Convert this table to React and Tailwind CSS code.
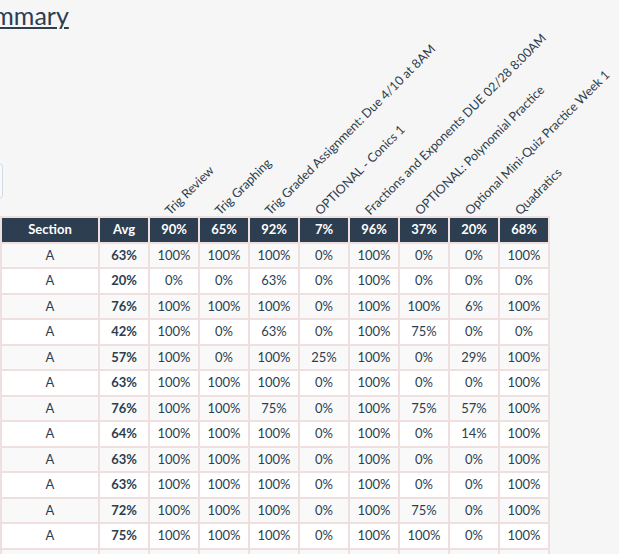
import React from "react";

const labels = [
  "Trig Review",
  "Trig Graphing",
  "Trig Graded Assignment: Due 4/10 at 8AM",
  "OPTIONAL - Conics 1",
  "Fractions and Exponents DUE 02/28 8:00AM",
  "OPTIONAL: Polynomial Practice",
  "Optional Mini-Quiz Practice Week 1",
  "Quadratics",
];

const totals = ["90%", "65%", "92%", "7%", "96%", "37%", "20%", "68%"];

const rows = [
  ["63%", 100, 100, 100, 0, 100, 0, 0, 100],
  ["20%", 0, 0, 63, 0, 100, 0, 0, 0],
  ["76%", 100, 100, 100, 0, 100, 100, 6, 100],
  ["42%", 100, 0, 63, 0, 100, 75, 0, 0],
  ["57%", 100, 0, 100, 25, 100, 0, 29, 100],
  ["63%", 100, 100, 100, 0, 100, 0, 0, 100],
  ["76%", 100, 100, 75, 0, 100, 75, 57, 100],
  ["64%", 100, 100, 100, 0, 100, 0, 14, 100],
  ["63%", 100, 100, 100, 0, 100, 0, 0, 100],
  ["63%", 100, 100, 100, 0, 100, 0, 0, 100],
  ["72%", 100, 100, 100, 0, 100, 75, 0, 100],
  ["75%", 100, 100, 100, 0, 100, 100, 0, 100],
  ["63%", 100, 100, 100, 0, 100, 0, 0, 100],
];

const cell = "border-2 border-[#f0dfdf] p-0";
const inner = "h-[23.5px] flex items-center justify-center";

export default function App() {
  return (
    <div className="w-[619px] h-[554px] overflow-hidden bg-[#f6f6f6] text-[#2c3e50] font-['Lato','Noto_Sans',sans-serif]">
      <div className="ml-[-150px]">
        {/* page title, scrolled partly out of view */}
        <h1 className="ml-[116px] text-[25px] leading-[30px] font-normal">
          <span className="underline decoration-[2px] underline-offset-[2px]">Summary</span>
        </h1>

        <div className="mt-[133px] ml-[10px] w-[143px] h-[36px] rounded-[4px] border border-[#cfdbe6] bg-[#f8f9fb]" />

        <table className="mt-[17px] table-fixed border-collapse text-[13px]">
          <colgroup>
            <col className="w-[150px]" />
            <col className="w-[98px]" />
            {Array.from({ length: 9 }).map((_, i) => (
              <col key={i} className="w-[50px]" />
            ))}
          </colgroup>
          <thead>
            <tr>
              <th className="p-0" />
              <th className="p-0" />
              <th className="p-0" />
              {labels.map((l) => (
                <th key={l} className="p-0 align-bottom font-normal">
                  <div className="h-[0px] flex items-end pl-[23px]">
                    <span className="block w-0 whitespace-nowrap leading-none text-[12.5px] origin-bottom-left translate-y-[1px] -rotate-45 text-[#2c3e50]">
                      {l}
                    </span>
                  </div>
                </th>
              ))}
            </tr>
            <tr className="bg-[#2c3e50] text-white font-bold">
              <th className={cell}>
                <div className={inner}>Name</div>
              </th>
              <th className={cell}>
                <div className={inner}>Section</div>
              </th>
              <th className={cell}>
                <div className={inner}>Avg</div>
              </th>
              {totals.map((t, i) => (
                <th key={i} className={cell}>
                  <div className={inner}>{t}</div>
                </th>
              ))}
            </tr>
          </thead>
          <tbody>
            {rows.map((r, i) => (
              <tr key={i} className={i % 2 === 0 ? "bg-[#f9f9f9]" : "bg-white"}>
                <td className={cell}>
                  <div className={inner}>Student</div>
                </td>
                <td className={cell}>
                  <div className={inner}>A</div>
                </td>
                <td className={cell}>
                  <div className={inner + " font-bold"}>{r[0]}</div>
                </td>
                {r.slice(1).map((v, j) => (
                  <td key={j} className={cell}>
                    <div className={inner}>{v}%</div>
                  </td>
                ))}
              </tr>
            ))}
          </tbody>
        </table>
      </div>
    </div>
  );
}
